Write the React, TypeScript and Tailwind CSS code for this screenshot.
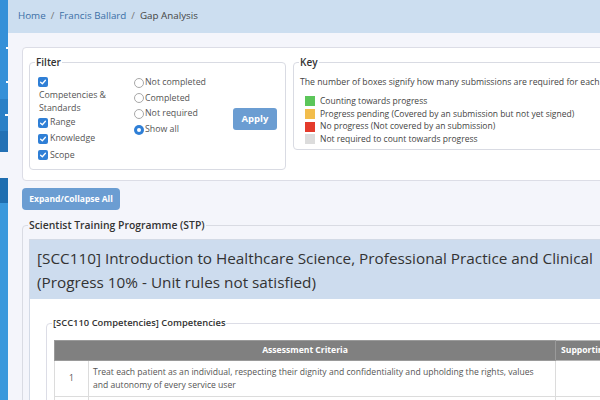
import React from 'react';

const Check = () => (
  <span className="inline-flex w-[10px] h-[10px] shrink-0 items-center justify-center rounded-[2px] bg-[#2f7fd6]">
    <svg viewBox="0 0 10 10" className="w-[8px] h-[8px]">
      <path d="M2 5.2 L4.2 7.2 L8 2.8" fill="none" stroke="white" strokeWidth="1.6" strokeLinecap="round" strokeLinejoin="round" />
    </svg>
  </span>
);

const Radio = ({ on }: { on?: boolean }) =>
  on ? (
    <span className="inline-flex w-[10px] h-[10px] shrink-0 items-center justify-center rounded-full bg-[#2f7fd6]">
      <span className="w-[4px] h-[4px] rounded-full bg-white" />
    </span>
  ) : (
    <span className="inline-block w-[10px] h-[10px] shrink-0 rounded-full border border-[#a8a8a8] bg-white" />
  );

const KeyItem = ({ color, label }: { color: string; label: string }) => (
  <div className="flex items-center h-[12.7px] gap-[5px] pl-[5px]">
    <span className={`w-[10px] h-[10px] ${color}`} />
    <span>{label}</span>
  </div>
);

const Sidebar = () => (
  <div className="w-[8px] shrink-0 flex flex-col">
    <div className="h-[99px] bg-[#3590d8] relative">
      <span className="absolute right-0 top-[47px] w-[2px] h-[2px] bg-white" />
      <span className="absolute right-0 top-[81px] w-[2px] h-[2px] bg-white" />
    </div>
    <div className="h-[32px] bg-[#2b80c6] relative">
      <span className="absolute right-0 top-[15px] w-[3px] h-[2px] bg-white" />
    </div>
    <div className="h-[21px] bg-[#2371b5]" />
    <div className="h-[26px] bg-[#f4f5fb]" />
    <div className="h-[25px] bg-[#1f6eb0]" />
    <div className="flex-1 bg-[#3a98dc]" />
  </div>
);

const FilterBox = () => (
  <fieldset className="w-[257px] h-[115px] shrink-0 border border-[#d9dbe3] rounded-[4px] px-[8px]">
    <legend className="ml-[-3px] px-[1px] text-[10px] leading-[14px] font-semibold text-[#333]">Filter</legend>
    <div className="flex items-start text-[8.8px] text-[#555]">
      <div className="w-[96px] pt-[8px]">
        <Check />
        <div className="leading-[13px] pl-[1px] mt-[-1.5px]">
          Competencies &amp;
          <br />
          Standards
        </div>
        <div className="flex items-center h-[16px] gap-[2px]">
          <Check />
          <span>Range</span>
        </div>
        <div className="flex items-center h-[16px] gap-[2px]">
          <Check />
          <span>Knowledge</span>
        </div>
        <div className="flex items-center h-[16px] gap-[2px] mt-[0.5px]">
          <Check />
          <span>Scope</span>
        </div>
      </div>
      <div className="w-[99px] pt-[6px]">
        <div className="flex items-center h-[15.6px] gap-[1px]">
          <Radio />
          <span>Not completed</span>
        </div>
        <div className="flex items-center h-[15.6px] gap-[1px]">
          <Radio />
          <span>Completed</span>
        </div>
        <div className="flex items-center h-[15.6px] gap-[1px]">
          <Radio />
          <span>Not required</span>
        </div>
        <div className="flex items-center h-[15.6px] gap-[1px]">
          <Radio on />
          <span>Show all</span>
        </div>
      </div>
      <button className="mt-[39px] w-[44px] h-[22px] rounded-[3px] bg-[#6b9dd2] text-white text-[9.5px] font-bold">
        Apply
      </button>
    </div>
  </fieldset>
);

const KeyBox = () => (
  <fieldset className="flex-1 h-[95px] border border-[#d9dbe3] rounded-[4px] px-[6px]">
    <legend className="ml-[-1px] px-[1px] text-[10px] leading-[14px] font-semibold text-[#333]">Key</legend>
    <div className="text-[8.5px] text-[#444]">
      <div className="leading-[12px] mt-[7px] whitespace-nowrap text-[8.7px]">
        The number of boxes signify how many submissions are required for each
      </div>
      <div className="mt-[7px]">
        <KeyItem color="bg-[#5cc65a]" label="Counting towards progress" />
        <KeyItem color="bg-[#f2bd4c]" label="Progress pending (Covered by an submission but not yet signed)" />
        <KeyItem color="bg-[#e43b2c]" label="No progress (Not covered by an submission)" />
        <KeyItem color="bg-[#dcdcdc]" label="Not required to count towards progress" />
      </div>
    </div>
  </fieldset>
);

const App = () => {
  return (
    <div className="flex w-[600px] h-[400px] overflow-hidden bg-[#f4f5fb] font-['Open_Sans',sans-serif]">
      <Sidebar />
      <div className="flex-1 min-w-0 overflow-hidden flex flex-col">
        <div className="h-[33px] shrink-0 bg-[#ccdef0] flex items-center px-[10px] text-[9.8px] text-[#3b6ea6] w-[760px]">
          <span>Home</span>
          <span className="px-[5px] text-[#777]">/</span>
          <span>Francis Ballard</span>
          <span className="px-[5px] text-[#777]">/</span>
          <span className="text-[#444]">Gap Analysis</span>
        </div>

        <div className="w-[760px] px-[14px]">
          {/* filter + key panel */}
          <div className="mt-[14px] bg-white border border-[#dcdde6] rounded-[4px] px-[6px] pt-[7px] pb-[10px] flex items-start gap-[7px]">
            <FilterBox />
            <KeyBox />
          </div>

          <button className="mt-[7px] w-[98px] h-[22px] rounded-[4px] bg-[#6b9dd2] text-white text-[8.5px] font-bold">
            Expand/Collapse All
          </button>

          {/* programme */}
          <fieldset className="mt-[8px] border border-[#d9dbe3] rounded-[4px] pl-[6px] pt-[7px] h-[400px]">
            <legend className="ml-[-1px] px-[1px] text-[10.4px] leading-[14px] font-semibold text-[#333]">
              Scientist Training Programme (STP)
            </legend>
            <div className="border border-[#d3dae6] bg-white">
              <div className="bg-[#cddcee] pl-[7px] pt-[6px] pb-[5px] text-[15.3px] leading-[24px] text-[#333] whitespace-nowrap">
                [SCC110] Introduction to Healthcare Science, Professional Practice and Clinical
                <br />
                (Progress 10% - Unit rules not satisfied)
              </div>
              <div className="pl-[16px] pt-[18px] pb-[20px]">
                <fieldset className="border border-[#dcdde6] rounded-[4px] pl-[7px] pt-[11px]">
                  <legend className="ml-[-2px] px-[1px] text-[9.4px] leading-[12px] font-semibold text-[#333]">
                    [SCC110 Competencies] Competencies
                  </legend>
                  <table className="w-[640px] border-collapse text-[8.6px]">
                    <thead>
                      <tr className="h-[20px] bg-[#808080] text-white font-bold">
                        <th colSpan={2} className="w-[501px] border border-[#9a9a9a] text-center">
                          Assessment Criteria
                        </th>
                        <th className="border border-[#b5b5b5] text-left pl-[5px]">Supporting Evidence</th>
                      </tr>
                    </thead>
                    <tbody className="text-[#555]">
                      <tr className="h-[36px]">
                        <td className="w-[34px] border border-[#dcdcdc] text-center">1</td>
                        <td className="w-[467px] border border-[#dcdcdc] pl-[4px] pr-[6px] leading-[13px]">
                          Treat each patient as an individual, respecting their dignity and confidentiality and upholding the rights, values
                          <br />
                          and autonomy of every service user
                        </td>
                        <td className="border border-[#dcdcdc]" />
                      </tr>
                      <tr className="h-[36px]">
                        <td className="border border-[#dcdcdc]" />
                        <td className="border border-[#dcdcdc]" />
                        <td className="border border-[#dcdcdc]" />
                      </tr>
                    </tbody>
                  </table>
                </fieldset>
              </div>
            </div>
          </fieldset>
        </div>
      </div>
    </div>
  );
};

export default App;
